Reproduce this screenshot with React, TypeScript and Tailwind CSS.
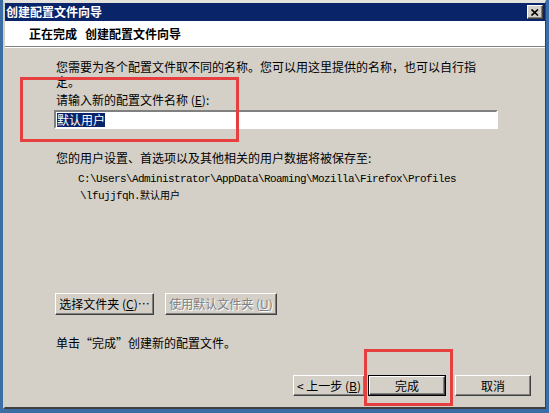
import { ReactNode } from "react";

const cjk = { fontFamily: '"Noto Sans CJK SC", "Liberation Sans", sans-serif' };
const mono = { fontFamily: '"Liberation Mono", "Noto Sans CJK SC", monospace' };

type BtnProps = {
  children: ReactNode;
  width: string;
  disabled?: boolean;
  isDefault?: boolean;
};

function ClassicButton({ children, width, disabled, isDefault }: BtnProps) {
  const face = (
    <div
      className={`flex h-full w-full items-center justify-center border border-t-white border-l-white border-r-[#404040] border-b-[#404040] bg-[#d4d0c8] text-[12px] leading-none shadow-[inset_-1px_-1px_0_#808080] ${
        disabled ? "text-[#808080] [text-shadow:1px_1px_0_#fff]" : "text-black"
      }`}
    >
      {children}
    </div>
  );
  if (isDefault) {
    return (
      <div className={`${width} h-full border border-black`} style={cjk}>
        {face}
      </div>
    );
  }
  return (
    <div className={`${width} h-full`} style={cjk}>
      {face}
    </div>
  );
}

export default function App() {
  return (
    <div className="relative h-[413px] w-[549px] overflow-hidden bg-[#3a6ea5]" style={cjk}>
      <div className="ml-[3px] flex h-[409px] w-[543px] flex-col border-t-[3px] border-l-2 border-r border-b-2 border-t-[#e4e2dc] border-l-[#d4d0c8] border-r-[#404040] border-b-[#404040] bg-[#d4d0c8]">
        {/* title bar */}
        <div className="flex h-[18px] items-center justify-between bg-[#0a246a] pl-[1px] pr-[2px]">
          <span className="text-[12px] font-bold leading-none text-white">创建配置文件向导</span>
          <div className="flex h-[14px] w-[16px] items-center justify-center border border-t-white border-l-white border-r-[#404040] border-b-[#404040] bg-[#d4d0c8] shadow-[inset_-1px_-1px_0_#808080]">
            <svg width="8" height="7" viewBox="0 0 8 7">
              <path d="M0.5 0.5 L7 6.5 M7 0.5 L0.5 6.5" stroke="#000" strokeWidth="1.6" />
            </svg>
          </div>
        </div>

        {/* header */}
        <div className="flex h-[26px] items-center border-b border-b-[#808080] bg-white pl-[24px]">
          <span className="text-[12px] font-bold leading-none text-black">
            正在完成<span className="inline-block w-[8px]"></span>创建配置文件向导
          </span>
        </div>
        <div className="h-px bg-white"></div>

        {/* body */}
        <div className="flex flex-1 flex-col pb-[11px] text-[12px] leading-[15px] text-black">
          <p className="ml-[51px] mt-[11px] w-[428px]">
            您需要为各个配置文件取不同的名称。您可以用这里提供的名称，也可以自行指定。
          </p>
          <p className="ml-[51px] mt-[3px]">
            请输入新的配置文件名称 (<u>E</u>):
          </p>
          <div className="ml-[49px] mt-[3px] h-[19px] w-[444px] border-2 border-t-[#808080] border-l-[#808080] border-r-white border-b-white bg-white">
            <div className="flex h-full items-center pl-[1px]">
              <span className="bg-[#0a246a] leading-[14px] text-white">默认用户</span>
            </div>
          </div>

          <p className="ml-[51px] mt-[21px]">您的用户设置、首选项以及其他相关的用户数据将被保存至:</p>
          <div className="ml-[73px] mt-[6px] text-[11px] leading-[16px] tracking-[-0.6px]" style={mono}>
            <div>C:\Users\Administrator\AppData\Roaming\Mozilla\Firefox\Profiles</div>
            <div className="pl-[2px]">
              \lfujjfqh.<span className="tracking-normal text-[10px]" style={cjk}>默认用户</span>
            </div>
          </div>

          <div className="ml-[50px] mt-[89px] flex h-[22px] gap-[11px]">
            <ClassicButton width="w-[99px]">
              选择文件夹 (<u>C</u>)…
            </ClassicButton>
            <ClassicButton width="w-[112px]" disabled>
              使用默认文件夹 (<u>U</u>)
            </ClassicButton>
          </div>

          <p className="ml-[51px] mt-[20px]">单击“完成”创建新的配置文件。</p>

          <div className="mt-auto flex h-[21px] pl-[288px]">
            <ClassicButton width="w-[72px]">
              &lt; 上一步 (<u>B</u>)
            </ClassicButton>
            <div className="ml-[3px] h-full">
              <ClassicButton width="w-[78px]" isDefault>
                完成
              </ClassicButton>
            </div>
            <div className="ml-[9px] h-full">
              <ClassicButton width="w-[76px]">取消</ClassicButton>
            </div>
          </div>
        </div>
      </div>

      {/* annotation boxes */}
      <div className="absolute left-[20px] top-[77px] h-[65px] w-[219px] border-[3px] border-[#e53f3f]"></div>
      <div className="absolute left-[364px] top-[349px] h-[57px] w-[89px] border-[3px] border-[#e53f3f]"></div>
    </div>
  );
}
